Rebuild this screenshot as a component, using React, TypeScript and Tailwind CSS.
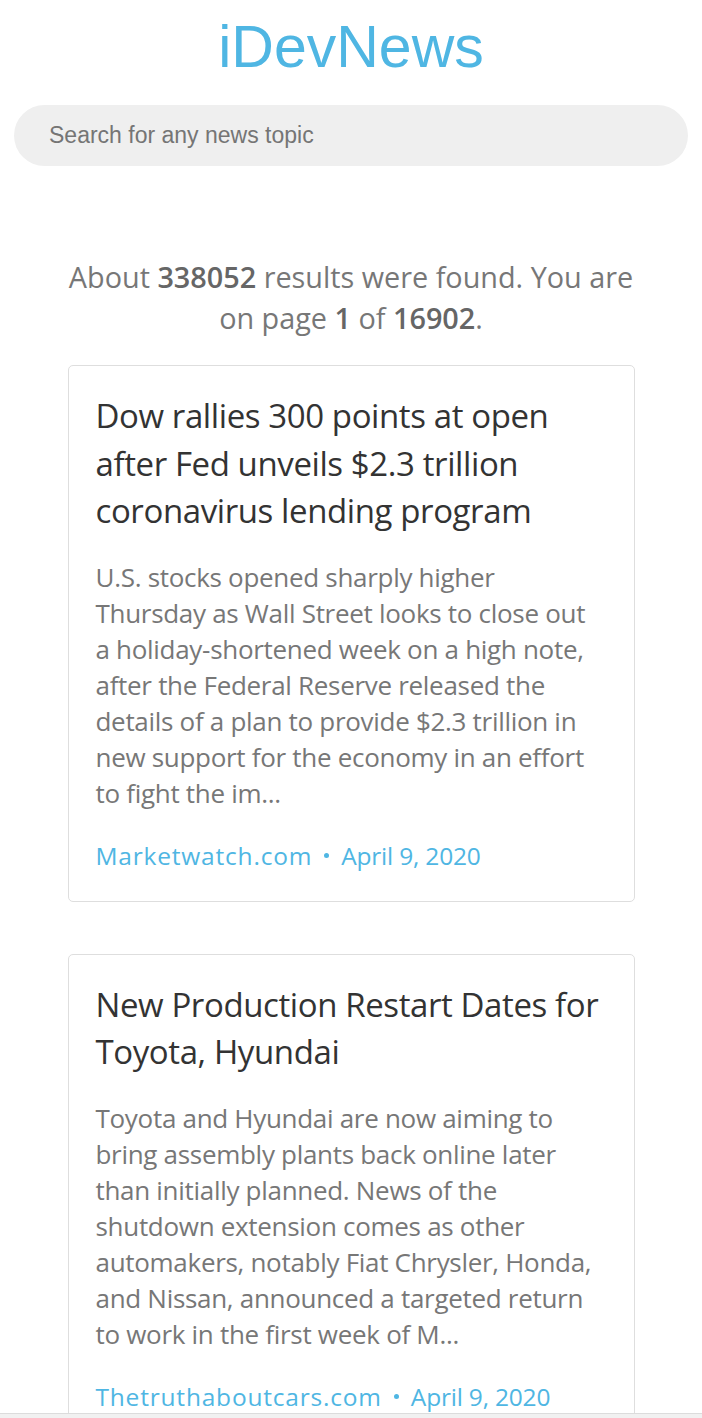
import React from "react";

interface Article {
  title: string;
  lines: string[];
  source: string;
  date: string;
}

const articles: Article[] = [
  {
    title: "Dow rallies 300 points at open after Fed unveils $2.3 trillion coronavirus lending program",
    lines: [
      "U.S. stocks opened sharply higher",
      "Thursday as Wall Street looks to close out",
      "a holiday-shortened week on a high note,",
      "after the Federal Reserve released the",
      "details of a plan to provide $2.3 trillion in",
      "new support for the economy in an effort",
      "to fight the im...",
    ],
    source: "Marketwatch.com",
    date: "April 9, 2020",
  },
  {
    title: "New Production Restart Dates for Toyota, Hyundai",
    lines: [
      "Toyota and Hyundai are now aiming to",
      "bring assembly plants back online later",
      "than initially planned. News of the",
      "shutdown extension comes as other",
      "automakers, notably Fiat Chrysler, Honda,",
      "and Nissan, announced a targeted return",
      "to work in the first week of M...",
    ],
    source: "Thetruthaboutcars.com",
    date: "April 9, 2020",
  },
];

const NewsCard: React.FC<{ article: Article }> = ({ article }) => (
  <div className="w-full border border-[#dedede] rounded-[5px] px-[27px] pt-[26px] pb-[27px]">
    <h2 className="text-[33px] leading-[47.5px] text-[#333] font-normal tracking-[-0.4px]">{article.title}</h2>
    <p className="mt-[24px] text-[26px] leading-[36px] text-[#777] tracking-[-0.3px]">
      {article.lines.map((l) => (
        <span key={l} className="block whitespace-nowrap">
          {l}
        </span>
      ))}
    </p>
    <div className="mt-[27px] text-[24.5px] leading-[36px] text-[#4fb6e3] flex items-center">
      <span className="tracking-[0.8px]">{article.source}</span>
      <span className="mx-[12px] w-[5px] h-[5px] rounded-full bg-[#4fb6e3]" />
      <span className="tracking-[-0.2px]">{article.date}</span>
    </div>
  </div>
);

export default function App() {
  return (
    <div className="min-h-screen bg-white" style={{ fontFamily: "'Open Sans', sans-serif" }}>
      <header className="pt-[14px] flex flex-col items-center">
        <h1
          className="text-[59px] leading-[66px] text-[#4fb6e3]"
          style={{ fontFamily: "'Liberation Sans', Arial, sans-serif" }}
        >
          iDevNews
        </h1>
      </header>

      <div className="px-[14px] mt-[25px]">
        <input
          type="text"
          placeholder="Search for any news topic"
          className="w-full h-[61px] rounded-full bg-[#efefef] pl-[35px] pr-6 text-[23px] text-[#555] placeholder:text-[#757575] outline-none"
          style={{ fontFamily: "'Liberation Sans', Arial, sans-serif" }}
        />
      </div>

      <main className="w-[567px] mx-auto mt-[90px] flex flex-col">
        <p className="text-center text-[28.8px] leading-[41px] text-[#777]">
          <span className="block whitespace-nowrap">
            About <span className="font-semibold text-[#666]">338052</span> results were found. You are
          </span>
          <span className="block whitespace-nowrap">
            on page <span className="font-semibold text-[#666]">1</span> of{" "}
            <span className="font-semibold text-[#666]">16902</span>.
          </span>
        </p>

        <div className="mt-[27px] flex flex-col gap-[52px] pb-10">
          {articles.map((a) => (
            <NewsCard key={a.title} article={a} />
          ))}
        </div>
      </main>

      <div className="fixed bottom-0 left-0 right-0 h-[5px] bg-[#f1f1f1] border-t border-[#dcdcdc]" />
    </div>
  );
}
